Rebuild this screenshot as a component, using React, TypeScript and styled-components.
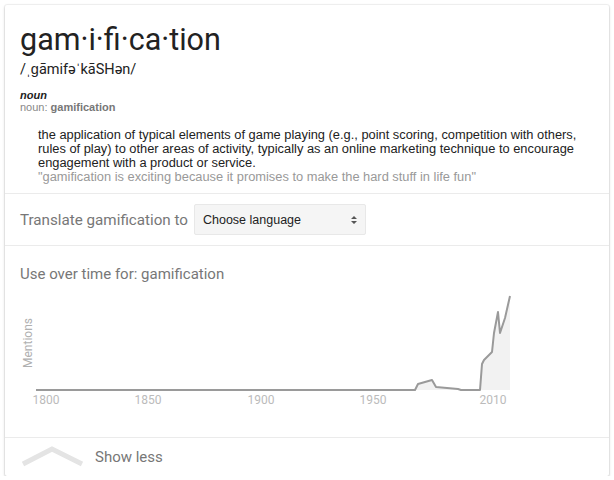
import React from "react";
import styled, { createGlobalStyle } from "styled-components";

const GlobalStyle = createGlobalStyle`
  html, body {
    margin: 0;
    padding: 0;
    background: #fff;
  }
  body {
    font-family: Roboto, "Liberation Sans", Arial, sans-serif;
  }
`;

const Card = styled.div`
  box-sizing: border-box;
  margin: 5px 0 0 5px;
  width: 604px;
  height: 471px;
  background: #fff;
  border-radius: 2px;
  box-shadow: 0 1px 3px rgba(0, 0, 0, 0.22), 0 0 0 1px rgba(0, 0, 0, 0.04);
  display: flex;
  flex-direction: column;
`;

const Section = styled.div<{ $height?: number }>`
  box-sizing: border-box;
  padding: 0 15px;
  border-bottom: 1px solid #ebebeb;
  ${(p) => (p.$height ? `height: ${p.$height}px;` : "")}
  &:last-child {
    border-bottom: 0;
    flex: 1;
  }
`;

const Headword = styled.div`
  padding-top: 16px;
  font-size: 30.5px;
  line-height: 38px;
  color: #222;
`;

const Phonetic = styled.div`
  margin-top: 2px;
  font-size: 14.5px;
  line-height: 18px;
  color: #222;
`;

const PartOfSpeech = styled.div`
  margin-top: 10px;
  font-family: "Liberation Sans", Arial, sans-serif;
  font-size: 11px;
  line-height: 12px;
  font-weight: bold;
  font-style: italic;
  color: #222;
`;

const Forms = styled.div`
  font-family: "Liberation Sans", Arial, sans-serif;
  font-size: 11px;
  line-height: 13px;
  color: #888;
  b {
    color: #777;
  }
`;

const Definition = styled.div`
  margin: 14px 0 0 18px;
  font-family: "Liberation Sans", Arial, sans-serif;
  font-size: 12.85px;
  line-height: 14px;
  color: #222;
`;

const Example = styled.div`
  color: #999;
`;

const TranslateRow = styled.div`
  display: flex;
  align-items: center;
  gap: 6px;
  height: 100%;
`;

const Label = styled.span`
  font-size: 15.2px;
  color: #777;
`;

const Select = styled.div`
  box-sizing: border-box;
  width: 172px;
  height: 31px;
  display: flex;
  align-items: center;
  justify-content: space-between;
  padding: 0 7px 0 8px;
  background: #f5f5f5;
  border: 1px solid #e8e8e8;
  border-radius: 2px;
  font-family: "Liberation Sans", Arial, sans-serif;
  font-size: 12.5px;
  color: #222;
`;

const Heading = styled.div`
  padding-top: 19px;
  font-size: 15px;
  line-height: 18px;
  color: #777;
`;

const Chart = styled.svg`
  display: block;
  margin: 4px 0 0 0;
`;

const FooterRow = styled.div`
  display: flex;
  align-items: center;
  gap: 11px;
  height: 100%;
`;

const ShowLess = styled.span`
  font-size: 15px;
  color: #777;
`;

const curve =
  "M36 389 L415 389 L418 383 L432 379 L436 386 L458 388 L461 389 L480 389 L482 363 L484 359 L492 351 L494 332 L498 311 L500 332 L505 317 L510 295";

const App: React.FC = () => {
  return (
    <>
      <GlobalStyle />
      <Card>
        <Section $height={189}>
          <Headword>gam·i·fi·ca·tion</Headword>
          <Phonetic>/ˌɡāmifəˈkāSHən/</Phonetic>
          <PartOfSpeech>noun</PartOfSpeech>
          <Forms>
            noun: <b>gamification</b>
          </Forms>
          <Definition>
            the application of typical elements of game playing (e.g., point scoring, competition with others, rules of
            play) to other areas of activity, typically as an online marketing technique to encourage engagement with a
            product or service.
            <Example>"gamification is exciting because it promises to make the hard stuff in life fun"</Example>
          </Definition>
        </Section>

        <Section $height={52}>
          <TranslateRow>
            <Label>Translate gamification to</Label>
            <Select>
              <span>Choose language</span>
              <svg width="8" height="12" viewBox="0 0 8 12">
                <path d="M1 5 L4 2 L7 5 Z M1 7 L4 10 L7 7 Z" fill="#555" />
              </svg>
            </Select>
          </TranslateRow>
        </Section>

        <Section $height={192}>
          <Heading>Use over time for: gamification</Heading>
          <Chart width="510" height="124" viewBox="20 286 510 124">
            <path d={curve + " L510 389 Z"} fill="#f2f2f2" />
            <path d={curve} fill="none" stroke="#9a9a9a" strokeWidth="2" strokeLinejoin="round" />
            <text
              x="0"
              y="0"
              transform="translate(32 342) rotate(-90)"
              textAnchor="middle"
              fontSize="12"
              fill="#b0b0b0"
              fontFamily="Roboto, Arial, sans-serif"
            >
              Mentions
            </text>
            <g fontSize="12" fill="#bbb" fontFamily="Roboto, Arial, sans-serif" textAnchor="middle">
              <text x="46" y="403">1800</text>
              <text x="148" y="403">1850</text>
              <text x="261" y="403">1900</text>
              <text x="373" y="403">1950</text>
              <text x="493" y="403">2010</text>
            </g>
          </Chart>
        </Section>

        <Section>
          <FooterRow>
            <svg width="64" height="26" viewBox="0 0 64 26">
              <polyline points="3,20 32,5 62,20" fill="none" stroke="#e4e4e4" strokeWidth="5" />
            </svg>
            <ShowLess>Show less</ShowLess>
          </FooterRow>
        </Section>
      </Card>
    </>
  );
};

export default App;
